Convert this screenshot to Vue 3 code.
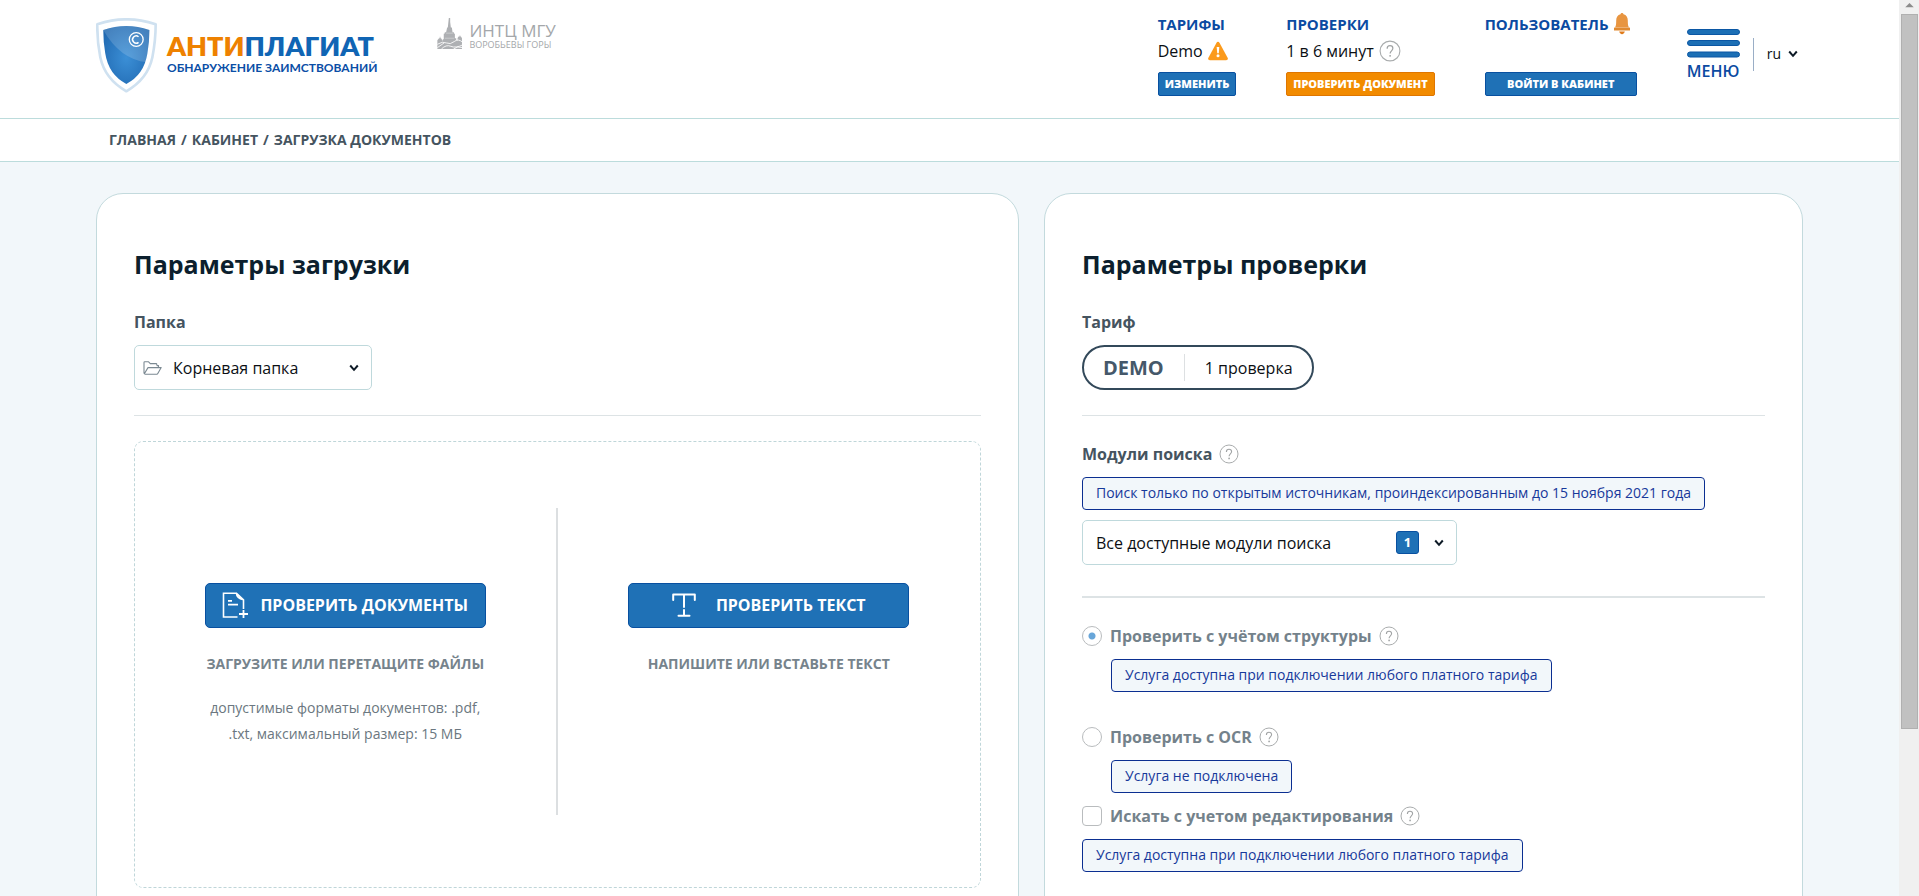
<script setup>
import { ref } from 'vue'

const folder = ref('root')
const modules = ref('all')
const mode = ref('structure')
const editing = ref(false)

const crumbs = [
  { text: 'ГЛАВНАЯ', href: '#main' },
  { text: 'КАБИНЕТ', href: '#cabinet' },
]
</script>

<template>
  <div class="window">
    <svg class="defs" width="0" height="0" aria-hidden="true">
      <symbol id="help" viewBox="0 0 20 20">
        <circle cx="10" cy="10" r="9" fill="none" stroke="#a9acad" stroke-width="1" />
        <path d="M7.4 7.9C7.4 6.1 8.5 5.2 10 5.2s2.6 1 2.6 2.4c0 2.2-2.5 2.3-2.5 4.7" fill="none" stroke="#a0a3a4" stroke-width="1.1" />
        <circle cx="10.1" cy="14.4" r=".85" fill="#a0a3a4" />
      </symbol>
      <symbol id="chevron" viewBox="0 0 10 8">
        <path d="M1.2 1.5L5 5.8l3.8-4.3" fill="none" stroke="#0d1a26" stroke-width="2" />
      </symbol>
    </svg>

    <div class="page">
      <header class="header">
        <a class="brand" href="#main">
          <svg class="shield" viewBox="47 53 185 227" aria-hidden="true">
            <defs>
              <radialGradient id="blue" cx=".5" cy=".55" r=".65">
                <stop offset="0" stop-color="#3b8fd6" />
                <stop offset="1" stop-color="#2068b0" />
              </radialGradient>
            </defs>
            <path d="M51 72Q98 56 139 57Q180 56 228 72Q228 120 218 172Q204 238 139 275Q74 238 60 172Q50 120 51 72Z" fill="#fff" stroke="#cfe1f0" stroke-width="8" stroke-linejoin="round" />
            <path d="M69 89Q104 77 139 77Q174 77 209 89Q209 125 203 160Q193 225 139 253Q85 225 75 160Q69 125 69 89Z" fill="url(#blue)" />
            <path d="M69 89Q104 77 139 77Q174 77 209 89Q209 140 201 187Q120 178 69 89Z" fill="#fff" opacity=".16" />
            <circle cx="169" cy="118" r="21" fill="none" stroke="#fff" stroke-width="4" />
            <path d="M176 109.500a11 11 0 1 0 0 17" fill="none" stroke="#fff" stroke-width="4.500" />
          </svg>
          <span class="brand-text">
            <span class="brand-name"><span class="orange">АНТИ</span>ПЛАГИАТ</span>
            <span class="brand-sub">ОБНАРУЖЕНИЕ ЗАИМСТВОВАНИЙ</span>
          </span>
        </a>

        <a class="partner" href="#partner">
          <svg class="tower" viewBox="0 0 75 92" aria-hidden="true">
            <path d="M34 0h4v12l2 16h3l2 14h4v4l3 1v13h4v6h4v-7l3-4h3v-3h2v3h2l3 5v32H0V66l5-6h2v-4h2v4h2l5 8v-5h3V47l3-1v-4h4l3-14h2z" fill="#aeb0b3" />
            <path d="M0 78Q16 68 27 74T50 70T75 72M12 92Q26 78 40 84T75 80M0 88L20 74M48 92Q60 82 75 88" fill="none" stroke="#fff" stroke-width="2.500" />
            <path d="M22 60h28M26 45h20" stroke="#fff" stroke-width="1.500" opacity=".7" />
          </svg>
          <span class="partner-text">
            <span class="partner-name">ИНТЦ МГУ</span>
            <span class="partner-sub">ВОРОБЬЕВЫ ГОРЫ</span>
          </span>
        </a>

        <div class="account">
          <section class="stat">
            <a class="stat-title" href="#tariffs">ТАРИФЫ</a>
            <p class="stat-value">
              Demo
              <svg width="20" height="20" viewBox="0 0 20 20" aria-hidden="true">
                <path d="M10 .8c.7 0 1.200.4 1.600 1.100l8 14.800c.7 1.400 0 2.500-1.500 2.500H1.900c-1.500 0-2.200-1.100-1.500-2.500l8-14.800C8.800 1.200 9.300.8 10 .8z" fill="#fb9a1c" />
                <path d="M8.700 6h2.600l-.5 6.200H9.200z" fill="#fff" />
                <circle cx="10" cy="14.700" r="1.500" fill="#fff" />
              </svg>
            </p>
            <button class="small-btn" type="button">ИЗМЕНИТЬ</button>
          </section>
          <section class="stat">
            <a class="stat-title" href="#checks">ПРОВЕРКИ</a>
            <p class="stat-value">
              1 в 6 минут
              <svg width="22" height="22" aria-hidden="true"><use href="#help" /></svg>
            </p>
            <button class="small-btn accent" type="button">ПРОВЕРИТЬ ДОКУМЕНТ</button>
          </section>
          <section class="stat">
            <a class="stat-title" href="#user">
              ПОЛЬЗОВАТЕЛЬ
              <svg width="16" height="22" viewBox="0 0 16 22" aria-hidden="true">
                <path d="M8 0c.9 0 1.400.6 1.500 1.300 2.900.8 4.300 3 4.300 6.200 0 4 .3 5.500 1.200 6.900H1c.9-1.400 1.200-2.900 1.200-6.900 0-3.200 1.400-5.400 4.300-6.200C6.600.6 7.100 0 8 0z" fill="#e89540" />
                <path d="M0 14.600h16v2.900H0z" fill="#e08a31" />
                <path d="M5.200 18.600h5.600c-.3 1.500-1.400 2.600-2.800 2.600s-2.500-1.100-2.800-2.600z" fill="#e07b1a" />
              </svg>
            </a>
            <button class="small-btn wide" type="button">ВОЙТИ В КАБИНЕТ</button>
          </section>

          <button class="menu" type="button">
            <svg width="53" height="29" viewBox="0 0 53 29" aria-hidden="true">
              <g fill="#1c6fb5" stroke="#0b57a4" stroke-width="1">
                <rect x=".5" y=".5" width="52" height="5" rx="2.500" />
                <rect x=".5" y="11.500" width="52" height="5" rx="2.500" />
                <rect x=".5" y="23" width="52" height="5" rx="2.500" />
              </g>
            </svg>
            <span>МЕНЮ</span>
          </button>
          <button class="lang" type="button">
            ru
            <svg width="10" height="8" aria-hidden="true"><use href="#chevron" /></svg>
          </button>
        </div>
      </header>

      <nav class="crumbs" aria-label="Навигация">
        <template v-for="c in crumbs" :key="c.text">
          <a :href="c.href">{{ c.text }}</a><span>/</span>
        </template>
        <span>ЗАГРУЗКА ДОКУМЕНТОВ</span>
      </nav>

      <main class="main">
        <section class="card">
          <h1>Параметры загрузки</h1>
          <label class="field-label" for="folder">Папка</label>
          <div class="select folder">
            <svg class="folder-icon" width="19" height="14" viewBox="0 0 19 14" aria-hidden="true">
              <path d="M1 12.500V1.500Q1 .8 1.700.8H5.600L7.300 2.600H13Q13.800 2.600 13.800 3.400V4.400M13.800 4.600h1.700v1.700M1.200 13L5 6.600H18.200L14.800 12.500Q14.500 13.200 13.800 13.200H1.500" fill="none" stroke="#7b8992" stroke-width="1.100" stroke-linejoin="round" />
            </svg>
            <select id="folder" v-model="folder">
              <option value="root">Корневая папка</option>
            </select>
            <svg class="arrow" width="10" height="8" aria-hidden="true"><use href="#chevron" /></svg>
          </div>
          <hr>
          <div class="drop">
            <div class="drop-half">
              <button class="big-btn docs" type="button">
                <svg width="26" height="26" viewBox="0 0 26 26" aria-hidden="true">
                  <path d="M15.500 25H1.500V1.200H14.500L21.500 7.800V17M14.500 1.200Q14.500 6 21.500 7.800" fill="none" stroke="#fff" stroke-width="1.600" />
                  <path d="M6 8.800h4M6 12.700h10M21.500 18v8M17 22h9" fill="none" stroke="#fff" stroke-width="1.800" />
                </svg>
                ПРОВЕРИТЬ ДОКУМЕНТЫ
              </button>
              <p class="caption">ЗАГРУЗИТЕ ИЛИ ПЕРЕТАЩИТЕ ФАЙЛЫ</p>
              <p class="formats">допустимые форматы документов: .pdf, .txt, максимальный размер: 15 МБ</p>
            </div>
            <div class="drop-half">
              <button class="big-btn text" type="button">
                <svg width="24" height="24" viewBox="0 0 24 24" aria-hidden="true">
                  <path d="M1.200 7V1.500H22.800V7M12 1.500V14M12 17v5.500M6.500 22.700h11" fill="none" stroke="#fff" stroke-width="2" stroke-linecap="round" stroke-linejoin="round" />
                </svg>
                ПРОВЕРИТЬ ТЕКСТ
              </button>
              <p class="caption">НАПИШИТЕ ИЛИ ВСТАВЬТЕ ТЕКСТ</p>
            </div>
          </div>
        </section>

        <section class="card">
          <h2>Параметры проверки</h2>
          <p class="field-label">Тариф</p>
          <div class="pill"><strong>DEMO</strong><span>1 проверка</span></div>
          <hr>
          <div class="label-row">
            <label class="field-label" for="modules">Модули поиска</label>
            <svg width="20" height="20" aria-hidden="true"><use href="#help" /></svg>
          </div>
          <p class="note">Поиск только по открытым источникам, проиндексированным до 15 ноября 2021 года</p>
          <div class="select modules">
            <select id="modules" v-model="modules">
              <option value="all">Все доступные модули поиска</option>
            </select>
            <span class="badge">1</span>
            <svg class="arrow" width="10" height="8" aria-hidden="true"><use href="#chevron" /></svg>
          </div>
          <hr class="thick">

          <div class="option">
            <input id="structure" v-model="mode" type="radio" name="mode" value="structure" disabled>
            <label for="structure">Проверить с учётом структуры</label>
            <svg width="20" height="20" aria-hidden="true"><use href="#help" /></svg>
          </div>
          <p class="note indent">Услуга доступна при подключении любого платного тарифа</p>

          <div class="option second">
            <input id="ocr" v-model="mode" type="radio" name="mode" value="ocr" disabled>
            <label for="ocr">Проверить с OCR</label>
            <svg width="20" height="20" aria-hidden="true"><use href="#help" /></svg>
          </div>
          <p class="note indent">Услуга не подключена</p>

          <div class="option third">
            <input id="editing" v-model="editing" type="checkbox" disabled>
            <label for="editing">Искать с учетом редактирования</label>
            <svg width="20" height="20" aria-hidden="true"><use href="#help" /></svg>
          </div>
          <p class="note">Услуга доступна при подключении любого платного тарифа</p>
        </section>
      </main>
    </div>

    <div class="scrollbar" aria-hidden="true">
      <svg width="20" height="13" viewBox="0 0 20 13"><path d="M5 7.500L10 2.500l5 5z" fill="#8b8b8b" /></svg>
      <div class="thumb"></div>
    </div>
  </div>
</template>

<style>
body {
  margin: 0;
}
</style>

<style scoped>
* {
  box-sizing: border-box;
}
.window {
  display: flex;
  height: 100vh;
  overflow: hidden;
  background: #f2f7fa;
  color: #0b0f14;
  font: 16px/24px "Open Sans", "Noto Sans", sans-serif;
}
.defs {
  position: absolute;
}
h1, h2, p {
  margin: 0;
}
a {
  color: inherit;
  text-decoration: none;
}
button, select, input {
  margin: 0;
  font: inherit;
  color: inherit;
}
button {
  padding: 0;
  border: 0;
  background: none;
  cursor: pointer;
}
svg {
  flex: none;
}
.page {
  flex: 1;
  min-width: 0;
}

/* header */
.header {
  display: flex;
  align-items: flex-start;
  height: 119px;
  padding: 0 96px;
  background: #fff;
  border-bottom: 1px solid #bcdcdc;
}
.brand {
  display: flex;
  gap: 10px;
  padding-top: 18px;
}
.shield {
  width: 61px;
  height: 75px;
}
.brand-text {
  display: flex;
  flex-direction: column;
  padding-top: 13px;
  font-family: Lato, "Open Sans", sans-serif;
  font-weight: 700;
}
.brand-name {
  color: #1065b4;
  font-size: 27px;
  font-weight: 800;
  line-height: 30px;
}
.orange {
  color: #ee8100;
}
.brand-sub {
  color: #0a4ea6;
  font-size: 12px;
  line-height: 14px;
}
.partner {
  display: flex;
  gap: 6px;
  margin-left: 60px;
  padding-top: 18px;
  color: #a4a7aa;
}
.tower {
  width: 26px;
  height: 31px;
}
.partner-text {
  display: flex;
  flex-direction: column;
  padding-top: 3px;
}
.partner-name {
  font-size: 17px;
  font-weight: 500;
  line-height: 19px;
}
.partner-sub {
  font-size: 9px;
  line-height: 9px;
}
.account {
  display: flex;
  margin-left: auto;
  padding: 12px 5px 0 0;
}
.stat {
  display: flex;
  flex-direction: column;
  align-items: flex-start;
  height: 84px;
  margin-right: 50px;
}
.stat-title {
  display: flex;
  align-items: center;
  gap: 6px;
  height: 23px;
  color: #0b4ba2;
  font-size: 15px;
  font-weight: 700;
}
.stat-value {
  display: flex;
  align-items: center;
  gap: 5px;
  margin-top: 4px;
}
.small-btn {
  height: 24px;
  margin-top: auto;
  padding: 0 6px;
  border: 1px solid #0850a0;
  border-radius: 2px;
  background: #1f71b6;
  color: #fff;
  font-size: 11px;
  font-weight: 800;
  line-height: 22px;
}
.small-btn.accent {
  border-color: #df7600;
  background: #f28b00;
}
.small-btn.wide {
  width: 152px;
}
.menu {
  display: flex;
  flex-direction: column;
  align-items: center;
  align-self: flex-start;
  gap: 1px;
  margin-top: 17px;
  color: #0b4ba2;
  font-weight: 600;
}
.lang {
  display: flex;
  align-items: center;
  gap: 7px;
  height: 33px;
  margin: 26px 0 0 13px;
  padding: 0 0 1px 13px;
  border-left: 1px solid #9aaec6;
  font-size: 14px;
}

/* breadcrumbs */
.crumbs {
  display: flex;
  align-items: center;
  gap: 5px;
  height: 43px;
  padding: 0 109px;
  background: #fff;
  border-bottom: 1px solid #bcdcdc;
  color: #45545f;
  font-size: 14px;
  font-weight: 700;
}

/* cards */
.main {
  display: grid;
  grid-template-columns: 923fr 759fr;
  gap: 25px;
  padding: 31px 96px;
}
.card {
  min-width: 0;
  padding: 52px 37px;
  border: 1px solid #c3dadd;
  border-radius: 27px;
  background: #fff;
}
h1, h2 {
  margin-bottom: 27px;
  color: #0c1f2e;
  font-size: 25px;
  font-weight: 700;
  line-height: 36px;
}
.field-label {
  display: block;
  color: #45545f;
  font-weight: 700;
  line-height: 26px;
}
hr {
  height: 1px;
  margin: 25px 0;
  border: 0;
  background: #dde3e5;
}
hr.thick {
  height: 2px;
  margin-top: 31px;
}
.select {
  position: relative;
  height: 45px;
  margin-top: 10px;
}
.select.folder {
  width: 238px;
}
.select.modules {
  width: 375px;
}
.select select {
  width: 100%;
  height: 100%;
  padding: 0 13px;
  border: 1px solid #bfd9dc;
  border-radius: 5px;
  background: #fff;
  appearance: none;
}
.select.folder select {
  padding-left: 38px;
}
.folder-icon {
  position: absolute;
  top: 16px;
  left: 9px;
}
.arrow {
  position: absolute;
  top: 19px;
  right: 13px;
}
.badge {
  position: absolute;
  top: 11px;
  right: 38px;
  width: 23px;
  height: 23px;
  border: 1px solid #0850a0;
  border-radius: 3px;
  background: #1f71b6;
  color: #fff;
  font-size: 13px;
  font-weight: 700;
  line-height: 21px;
  text-align: center;
}
.drop {
  display: grid;
  grid-template-columns: 1fr 1fr;
  padding: 66px 0 72px;
  border: 1px dashed #bfd6d9;
  border-radius: 9px;
}
.drop-half {
  display: flex;
  flex-direction: column;
  align-items: center;
  min-height: 307px;
  padding-top: 75px;
}
.drop-half:first-child {
  border-right: 2px solid #dcdfe1;
}
.big-btn {
  display: flex;
  align-items: center;
  justify-content: center;
  gap: 12px;
  width: 281px;
  height: 45px;
  padding-bottom: 2px;
  border: 1px solid #0850a0;
  border-radius: 5px;
  background: #1f71b6;
  color: #fff;
  font-weight: 700;
}
.big-btn.text {
  gap: 20px;
}
.caption {
  margin-top: 24px;
  color: #76838c;
  font-size: 14px;
  font-weight: 700;
}
.formats {
  width: 281px;
  margin-top: 19px;
  color: #6b7780;
  font-size: 14px;
  line-height: 26px;
  text-align: center;
}
.pill {
  display: inline-flex;
  align-items: center;
  height: 45px;
  margin-top: 10px;
  padding: 0 19px;
  border: 2px solid #33495a;
  border-radius: 23px;
  vertical-align: top;
}
.pill strong {
  padding-right: 20px;
  border-right: 1px solid #dde0e2;
  color: #45586a;
  font-size: 20px;
  line-height: 27px;
}
.pill span {
  padding-left: 20px;
}
.label-row {
  display: flex;
  align-items: center;
  gap: 7px;
}
.note {
  width: fit-content;
  margin-top: 10px;
  padding: 0 13px 2px;
  border: 1px solid #0b2f91;
  border-radius: 4px;
  background: #f2f7fa;
  color: #17399a;
  font-size: 14px;
  line-height: 29px;
}
.note.indent {
  margin-left: 29px;
}
.option {
  display: flex;
  align-items: center;
  gap: 7px;
  color: #74828b;
  font-weight: 700;
  line-height: 26px;
}
.option.second {
  margin-top: 32px;
}
.option.third {
  margin-top: 10px;
}
.option input {
  width: 20px;
  height: 20px;
  margin-right: 1px;
  border: 1px solid #b9bcbe;
  background: #fff;
  appearance: none;
}
.option input[type="radio"] {
  border-radius: 50%;
}
.option input[type="radio"]:checked {
  background: radial-gradient(circle, #68a6d9 3px, #fff 4px);
}
.option input[type="checkbox"] {
  border-radius: 4px;
}

/* scrollbar */
.scrollbar {
  width: 20px;
  padding: 0 1px 0 2px;
  background: #f0f0f0;
}
.scrollbar svg {
  display: block;
  width: 17px;
}
.thumb {
  height: calc(80% - 2px);
  margin-top: 1px;
  border: 1px solid #b0b0b0;
  background: #c1c1c1;
}
</style>
